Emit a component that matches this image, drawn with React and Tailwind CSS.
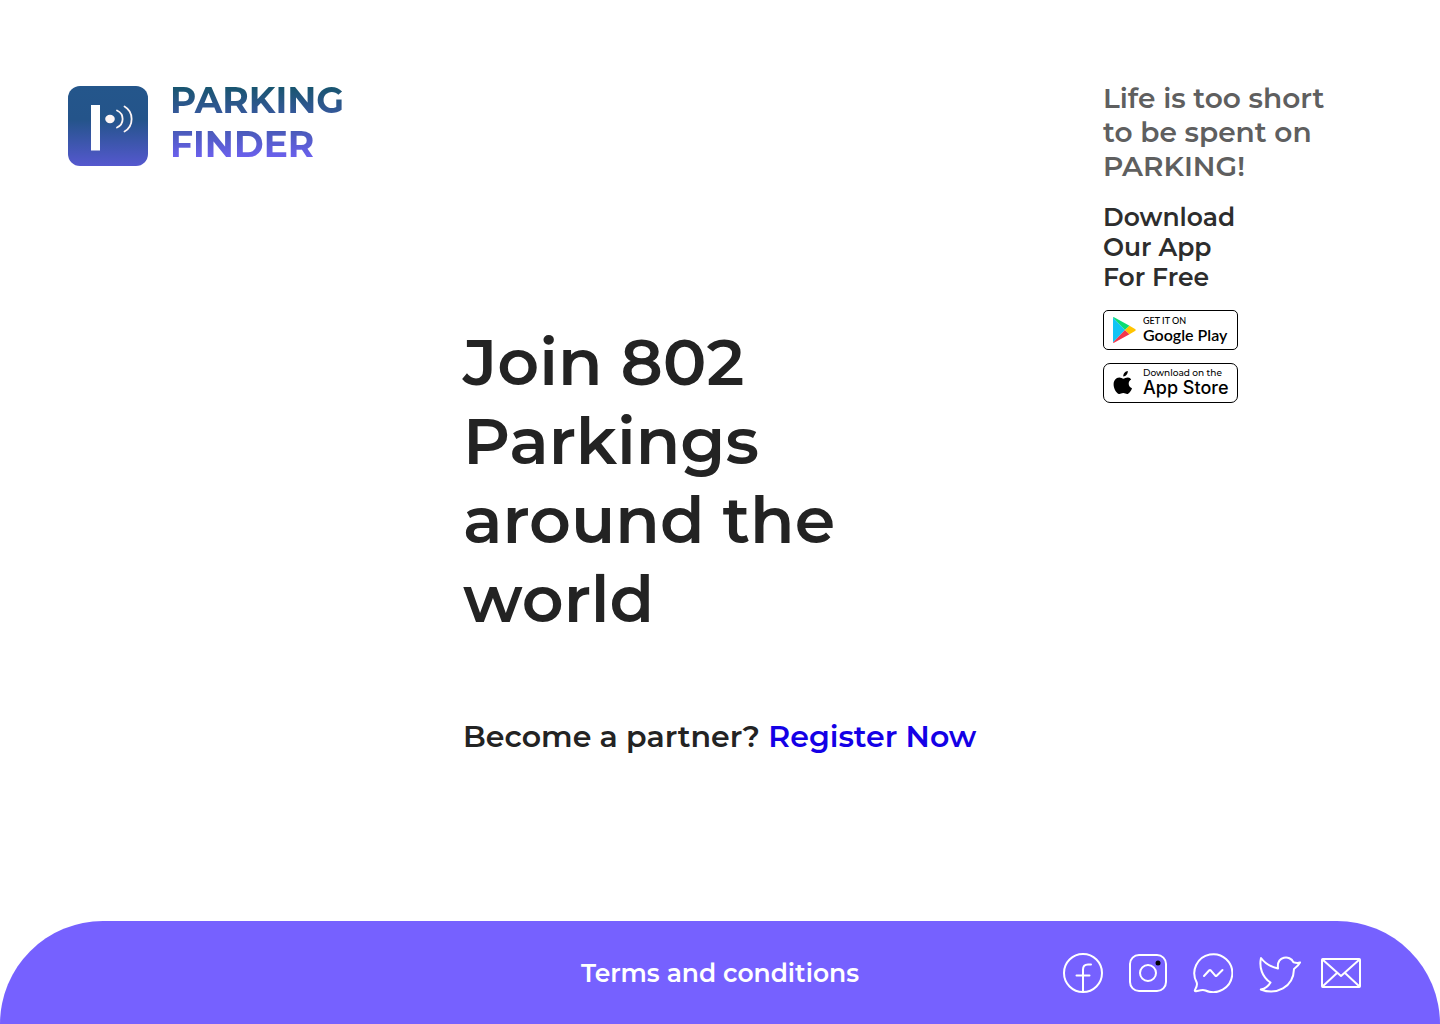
const stroke = {
  fill: "none",
  stroke: "#fff",
  strokeWidth: 2,
  strokeLinecap: "round",
  strokeLinejoin: "round",
};

function Logo() {
  return (
    <svg viewBox="0 0 80 80" className="size-20 shrink-0" aria-hidden="true">
      <defs>
        <linearGradient id="tile" x1="0" y1="0" x2="0" y2="1">
          <stop offset="0" stopColor="#24568b" />
          <stop offset="0.42" stopColor="#24548a" />
          <stop offset="1" stopColor="#5558cf" />
        </linearGradient>
      </defs>
      <rect width="80" height="80" rx="12" fill="url(#tile)" />
      <rect x="23" y="19" width="9" height="45.500" fill="#fff" />
      <ellipse cx="42" cy="33" rx="4.8" ry="4.2" fill="#fdf5f5" />
      <g fill="none" stroke="#fdf5f5" strokeWidth="1.8" strokeLinecap="round">
        <path d="M49 24.500C56.500 28 56.500 38 49 41.500" />
        <path d="M56.500 20.500C66 26 66 40 56.500 45.500" />
      </g>
    </svg>
  );
}

function StoreBadge({ label, rounded, top, name, children, topClass, nameClass }) {
  return (
    <a
      href="#"
      aria-label={label}
      className={`flex h-10 w-[135px] items-center border border-black bg-white pl-2 text-black ${rounded}`}
    >
      {children}
      <span className="flex flex-col pl-[7px] whitespace-nowrap">
        <span className={topClass}>{top}</span>
        <span className={nameClass}>{name}</span>
      </span>
    </a>
  );
}

function PlayIcon() {
  return (
    <svg viewBox="0 0 24 28" className="h-7 w-6 shrink-0" aria-hidden="true">
      <path d="M1 1.500V26.500L13 14Z" fill="#12c4f5" />
      <path d="M1 1.500Q1.500 .8 2.500 1.400L17.500 9.800L13 14Z" fill="#0bdc73" />
      <path d="M1 26.500Q1.500 27.200 2.500 26.600L17.500 18.200L13 14Z" fill="#f4364c" />
      <path d="M17.500 9.800L23 13Q24.500 14 23 15L17.500 18.200L13 14Z" fill="#ffc400" />
    </svg>
  );
}

function AppleIcon() {
  return (
    <svg viewBox="0 0 24 28" className="h-7 w-6 shrink-0" aria-hidden="true">
      <path d="M15.800 2C16 4.900 13.700 7.500 11.300 7.400C11.100 4.800 13.400 2.200 15.800 2ZM19.200 10.500C17.600 11.500 16.600 12.900 16.700 14.800C16.700 16.900 18 18.500 20 19.300C19.300 21.300 17.700 24.400 15.700 24.900C13.900 25.200 13.300 24 11.200 24C9.200 24 8.500 25.200 6.800 24.900C4 23.900 1.500 19.300 1.600 15.200C1.700 11.400 4 8.600 7.200 8.500C9 8.500 10.300 9.700 11.400 9.700C12.500 9.700 14 8.400 16 8.500C17.300 8.600 18.500 9.300 19.200 10.500Z" />
    </svg>
  );
}

function Facebook() {
  return (
    <svg viewBox="0 0 40 40" className="size-10" aria-hidden="true" {...stroke}>
      <circle cx="20" cy="20" r="19" />
      <path d="M20 39V16.500Q20 11.500 25 11.500H28M13.500 22.500H26.500" />
    </svg>
  );
}

function Instagram() {
  return (
    <svg viewBox="0 0 40 40" className="size-10" aria-hidden="true" {...stroke}>
      <rect x="2" y="2" width="36" height="36" rx="9" />
      <circle cx="20" cy="20" r="8" />
      <circle cx="30" cy="10" r="2.500" fill="#000" stroke="none" />
    </svg>
  );
}

function Messenger() {
  return (
    <svg viewBox="0 0 40 40" className="size-10" aria-hidden="true" {...stroke}>
      <path d="M3.600 29.200A19 19 0 1 1 12.500 37.500C9 36.300 6 37.800 3 38.300C1.500 38.400 1.600 37.600 2.200 36.500C4 33.500 4.500 31.500 3.600 29.200Z" />
      <path d="M11 23L16.300 17.300Q17 16.700 17.700 17.300L22.300 22.700Q23 23.300 23.700 22.700L29.500 17" />
    </svg>
  );
}

function Twitter() {
  return (
    <svg viewBox="-1 0 42 40" className="h-10 w-[42px] overflow-visible" aria-hidden="true" {...stroke}>
      <path d="M19 15.500C12 14 6 10.500 2 5C0 14 3 24 11.500 29.500C9.500 33 6.500 35.500 1.800 36.500C17 42.500 34.500 34.500 35 16C37 14.500 39.500 12.500 41 9.500C39 10.200 37 10 34.500 9.300C31 1.500 17.500 3 19 15.500Z" />
    </svg>
  );
}

function Mail() {
  return (
    <svg viewBox="0 0 40 40" className="size-10" aria-hidden="true" {...stroke}>
      <rect x="1" y="6" width="38" height="28" rx="1" />
      <path d="M1.500 6.500L20 23L38.500 6.500M1.500 33.500L16 20M38.500 33.500L24 20" />
    </svg>
  );
}

export default function App() {
  return (
    <div className="flex min-h-screen flex-col bg-white font-['Montserrat','Inter',sans-serif] font-semibold text-[#232323]">
      <div className="grid flex-1 grid-cols-[395fr_640fr_269fr] px-17">
        <header className="flex items-start gap-[22px] pt-[86px]">
          <Logo />
          <p className="-mt-2 bg-linear-to-b from-[#075361] via-[#3d58a8] to-[#7661ff] bg-clip-text text-[36px] leading-11 font-bold text-transparent">
            PARKING
            <br />
            FINDER
          </p>
        </header>

        <main className="pt-[322px]">
          <h1 className="text-[65px] leading-[79px]">
            Join 802
            <br />
            Parkings
            <br />
            around the
            <br />
            world
          </h1>
          <p className="pt-[79px] text-[30px] leading-10 whitespace-nowrap">
            Become a partner?{" "}
            <a href="#" className="text-[#1400e6]">
              Register Now
            </a>
          </p>
        </main>

        <aside className="pt-[81px]">
          <p className="text-[28px] leading-[34px] whitespace-nowrap text-[#5f5f5f]">
            Life is too short
            <br />
            to be spent on
            <br />
            PARKING!
          </p>
          <p className="pt-[19px] text-[25px] leading-[30px] text-[#2d2d2d]">
            Download
            <br />
            Our App
            <br />
            For Free
          </p>
          <div className="flex flex-col gap-[13px] pt-[18px]">
            <StoreBadge
              label="Get it on Google Play"
              rounded="rounded-[5px]"
              top="GET IT ON"
              name="Google Play"
              topClass="font-[Lato] text-[9px] leading-[10px] font-medium"
              nameClass="font-[Lato] text-[16px] leading-[18px] font-semibold"
            >
              <PlayIcon />
            </StoreBadge>
            <StoreBadge
              label="Download on the App Store"
              rounded="rounded-[7px]"
              top="Download on the"
              name="App Store"
              topClass="text-[9px] leading-[10px] font-medium"
              nameClass="font-[Inter] text-[18px] leading-5 font-medium"
            >
              <AppleIcon />
            </StoreBadge>
          </div>
        </aside>
      </div>

      <footer className="grid h-[103px] grid-cols-[1fr_auto_1fr] items-center rounded-t-[103px] bg-[#7661ff] px-[79px] text-white">
        <a href="#" className="col-start-2 text-[25px] leading-8">
          Terms and conditions
        </a>
        <nav className="flex items-center justify-end gap-[25px]" aria-label="Social links">
          <a href="#" aria-label="Facebook"><Facebook /></a>
          <a href="#" aria-label="Instagram"><Instagram /></a>
          <a href="#" aria-label="Messenger"><Messenger /></a>
          <a href="#" aria-label="Twitter"><Twitter /></a>
          <a href="#" aria-label="Email" className="-ml-1"><Mail /></a>
        </nav>
      </footer>
    </div>
  );
}
